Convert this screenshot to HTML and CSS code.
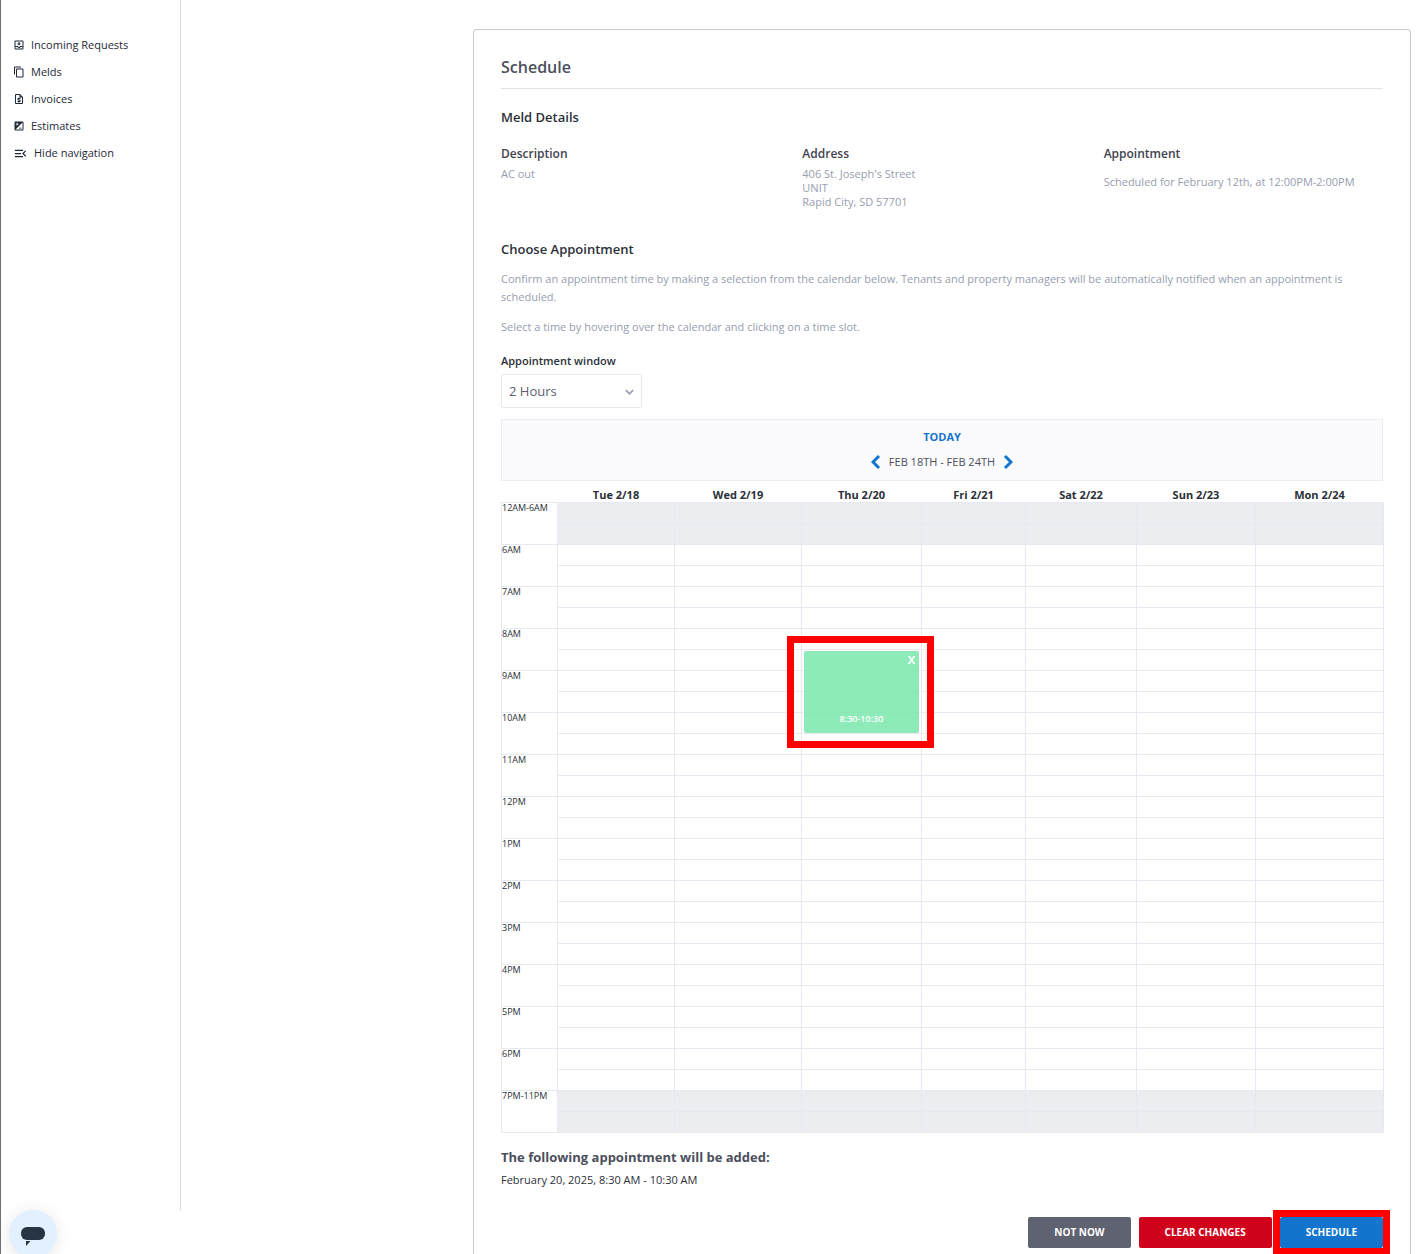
FILE: index.html
```html
<!DOCTYPE html>
<html lang="en">
<head>
<meta charset="utf-8">
<meta name="viewport" content="width=device-width, initial-scale=1">
<title>Schedule</title>
<link rel="stylesheet" href="styles.css">
</head>
<body>
<div class="layout">
  <nav class="sidebar" aria-label="Main">
    <a class="nav-link" href="#requests"><svg class="icon" viewBox="0 0 24 24"><path d="M19 3H5a2 2 0 0 0-2 2v14a2 2 0 0 0 2 2h14a2 2 0 0 0 2-2V5a2 2 0 0 0-2-2zM5 19v-3h3.600c.7 1.200 2 2 3.400 2s2.800-.8 3.400-2H19v3H5zm14-5h-5a2 2 0 0 1-4 0H5V5h14v9zm-3-5h-3V6h-2v3H8l4 4 4-4z"/></svg>Incoming Requests</a>
    <a class="nav-link" href="#melds"><svg class="icon" viewBox="0 0 24 24"><path d="M16 1H4a2 2 0 0 0-2 2v14h2V3h12V1zm3 4H8a2 2 0 0 0-2 2v14a2 2 0 0 0 2 2h11a2 2 0 0 0 2-2V7a2 2 0 0 0-2-2zm0 16H8V7h11v14z"/></svg>Melds</a>
    <a class="nav-link" href="#invoices"><svg class="icon" viewBox="0 0 24 24"><path d="M14 2H6a2 2 0 0 0-2 2v16a2 2 0 0 0 2 2h12a2 2 0 0 0 2-2V8l-6-6zM6 20V4h7v5h5v11H6zm5-1h2v-1h1a1 1 0 0 0 1-1v-3a1 1 0 0 0-1-1h-3v-1h4v-2h-2V9h-2v1h-1a1 1 0 0 0-1 1v3a1 1 0 0 0 1 1h3v1H9v2h2v1z"/></svg>Invoices</a>
    <a class="nav-link" href="#estimates"><svg class="icon" viewBox="0 0 24 24"><path d="M19 3H5a2 2 0 0 0-2 2v14a2 2 0 0 0 2 2h14a2 2 0 0 0 2-2V5a2 2 0 0 0-2-2zM5.500 7.500h2v-2H9v2h2V9H9v2H7.500V9h-2V7.500zM19 19H5L19 5v14zm-2-2v-1.500h-5V17h5z"/></svg>Estimates</a>
    <a class="nav-link" href="#hide"><svg class="icon icon-wide" viewBox="0 0 24 24"><path d="M3 18h13v-2H3v2zm0-5h10v-2H3v2zm0-7v2h13V6H3zm18 9.590L17.420 12 21 8.410 19.590 7l-5 5 5 5L21 15.590z"/></svg>Hide navigation</a>
  </nav>

  <main class="content">
    <section class="card">
      <h1 class="card-title">Schedule</h1>

      <h2 class="section-title">Meld Details</h2>
      <div class="details">
        <div>
          <h3 class="detail-label">Description</h3>
          <p class="detail-text">AC out</p>
        </div>
        <div>
          <h3 class="detail-label">Address</h3>
          <address class="detail-text">406 St. Joseph's Street<br>UNIT<br>Rapid City, SD 57701</address>
        </div>
        <div>
          <h3 class="detail-label">Appointment</h3>
          <p class="detail-text detail-text-spaced">Scheduled for February 12th, at 12:00PM-2:00PM</p>
        </div>
      </div>

      <h2 class="section-title choose-title">Choose Appointment</h2>
      <div class="hints">
        <p>Confirm an appointment time by making a selection from the calendar below. Tenants and property managers will be automatically notified when an appointment is scheduled.</p>
        <p>Select a time by hovering over the calendar and clicking on a time slot.</p>
      </div>

      <label class="field-label" for="window">Appointment window</label>
      <div class="select-wrap">
        <select class="select" id="window">
          <option>1 Hour</option>
          <option selected>2 Hours</option>
          <option>4 Hours</option>
        </select>
        <svg class="select-arrow" viewBox="0 0 10 6"><path d="M1 1l4 4 4-4"/></svg>
      </div>

      <div class="calendar-bar">
        <button class="today" type="button">TODAY</button>
        <div class="week">
          <button class="week-step" type="button" aria-label="Previous week"><svg viewBox="0 0 10 16"><path d="M8 2L2 8l6 6"/></svg></button>
          <span>FEB 18TH - FEB 24TH</span>
          <button class="week-step" type="button" aria-label="Next week"><svg viewBox="0 0 10 16"><path d="M2 2l6 6-6 6"/></svg></button>
        </div>
      </div>

      <table class="calendar">
        <colgroup><col class="c-time"><col class="c-tue"><col class="c-wed"><col class="c-thu"><col class="c-fri"><col class="c-sat"><col class="c-sun"><col class="c-mon"></colgroup>
        <thead>
          <tr><td></td><th scope="col">Tue 2/18</th><th scope="col">Wed 2/19</th><th scope="col">Thu 2/20</th><th scope="col">Fri 2/21</th><th scope="col">Sat 2/22</th><th scope="col">Sun 2/23</th><th scope="col">Mon 2/24</th></tr>
        </thead>
        <tbody>
          <tr class="off"><th scope="rowgroup" rowspan="2">12AM-6AM</th><td><td><td><td><td><td><td></tr>
          <tr class="off"><td><td><td><td><td><td><td></tr>
          <tr><th scope="rowgroup" rowspan="2">6AM</th><td><td><td><td><td><td><td></tr>
          <tr><td><td><td><td><td><td><td></tr>
          <tr><th scope="rowgroup" rowspan="2">7AM</th><td><td><td><td><td><td><td></tr>
          <tr><td><td><td><td><td><td><td></tr>
          <tr><th scope="rowgroup" rowspan="2">8AM</th><td><td><td><td><td><td><td></tr>
          <tr><td><td><td><div class="slot"><div class="highlight"><div class="event"><button class="event-close" type="button" aria-label="Remove 8:30-10:30">X</button><span class="event-time">8:30-10:30</span></div></div></div><td><td><td><td></tr>
          <tr><th scope="rowgroup" rowspan="2">9AM</th><td><td><td><td><td><td><td></tr>
          <tr><td><td><td><td><td><td><td></tr>
          <tr><th scope="rowgroup" rowspan="2">10AM</th><td><td><td><td><td><td><td></tr>
          <tr><td><td><td><td><td><td><td></tr>
          <tr><th scope="rowgroup" rowspan="2">11AM</th><td><td><td><td><td><td><td></tr>
          <tr><td><td><td><td><td><td><td></tr>
          <tr><th scope="rowgroup" rowspan="2">12PM</th><td><td><td><td><td><td><td></tr>
          <tr><td><td><td><td><td><td><td></tr>
          <tr><th scope="rowgroup" rowspan="2">1PM</th><td><td><td><td><td><td><td></tr>
          <tr><td><td><td><td><td><td><td></tr>
          <tr><th scope="rowgroup" rowspan="2">2PM</th><td><td><td><td><td><td><td></tr>
          <tr><td><td><td><td><td><td><td></tr>
          <tr><th scope="rowgroup" rowspan="2">3PM</th><td><td><td><td><td><td><td></tr>
          <tr><td><td><td><td><td><td><td></tr>
          <tr><th scope="rowgroup" rowspan="2">4PM</th><td><td><td><td><td><td><td></tr>
          <tr><td><td><td><td><td><td><td></tr>
          <tr><th scope="rowgroup" rowspan="2">5PM</th><td><td><td><td><td><td><td></tr>
          <tr><td><td><td><td><td><td><td></tr>
          <tr><th scope="rowgroup" rowspan="2">6PM</th><td><td><td><td><td><td><td></tr>
          <tr><td><td><td><td><td><td><td></tr>
          <tr class="off"><th scope="rowgroup" rowspan="2">7PM-11PM</th><td><td><td><td><td><td><td></tr>
          <tr class="off"><td><td><td><td><td><td><td></tr>
        </tbody>
      </table>

      <h3 class="summary-title">The following appointment will be added:</h3>
      <p class="summary-text">February 20, 2025, 8:30 AM - 10:30 AM</p>

      <div class="actions">
        <button class="btn btn-grey" type="button">NOT NOW</button>
        <button class="btn btn-red" type="button">CLEAR CHANGES</button>
        <div class="btn-frame"><button class="btn btn-blue" type="button">SCHEDULE</button></div>
      </div>
    </section>
  </main>
</div>
<button class="chat" type="button" aria-label="Open chat"><svg viewBox="0 0 26 20"><rect x="1" y="0" width="24" height="13" rx="6"/><path d="M6 14h4.500L6 19z"/></svg></button>
</body>
</html>
```
FILE: styles.css
```css
* {
  box-sizing: border-box;
}

body {
  margin: 0;
  background: #fff;
  color: #2b2f38;
  font-family: "Open Sans", "Noto Sans", sans-serif;
  font-size: 11px;
  line-height: 16px;
}

h1, h2, h3, p, address {
  margin: 0;
  font-style: normal;
}

button {
  border: 0;
  padding: 0;
  background: none;
  font-family: inherit;
  cursor: pointer;
}

.layout {
  display: flex;
  min-height: 100vh;
  border-left: 1px solid #6e6e6e;
}

.sidebar {
  display: flex;
  flex-direction: column;
  flex: none;
  gap: 11px;
  width: 180px;
  margin-bottom: 44px;
  padding: 37px 12px;
  border-right: 1px solid #d3d9e0;
}

.nav-link {
  display: flex;
  align-items: center;
  gap: 6px;
  color: #1f2937;
  font-weight: 500;
  text-decoration: none;
}

.icon {
  width: 12px;
  height: 12px;
  fill: currentColor;
}

.icon-wide {
  width: 15px;
  height: 15px;
}

.content {
  display: flex;
  flex: 1;
  min-width: 0;
  padding: 29px 11px 0 292px;
}

.card {
  flex: 1;
  min-width: 0;
  padding: 25px 27px 6px;
  border: 1px solid #c9c9c9;
  border-bottom: 0;
  border-radius: 4px 4px 0 0;
}

.card-title {
  padding-bottom: 9px;
  border-bottom: 1px solid #e3e3e3;
  color: #4b4f5c;
  font-size: 16px;
  font-weight: 600;
  line-height: 24px;
}

.section-title {
  margin-top: 18px;
  font-size: 13px;
  font-weight: 600;
  line-height: 20px;
}

.details {
  display: grid;
  grid-template-columns: repeat(3, 1fr);
  gap: 22px;
  margin-top: 19px;
}

.detail-label {
  color: #3f4350;
  font-size: 12px;
  font-weight: 600;
}

.detail-text {
  margin-top: 5px;
  color: #979db0;
  line-height: 14px;
}

.detail-text-spaced {
  margin-top: 13px;
}

.choose-title {
  margin-top: 30px;
}

.hints {
  display: grid;
  gap: 12px;
  margin-top: 11px;
  color: #979db0;
  line-height: 18px;
}

.field-label {
  display: block;
  margin: 17px 0 5px;
  font-weight: 600;
}

.select-wrap {
  position: relative;
  width: 141px;
}

.select {
  display: block;
  width: 100%;
  height: 34px;
  padding: 0 7px;
  border: 1px solid #e8e9ee;
  border-radius: 2px;
  background: #fff;
  color: #5a5e6d;
  font-family: inherit;
  font-size: 13px;
  appearance: none;
}

.select-arrow {
  position: absolute;
  top: 15px;
  right: 8px;
  width: 9px;
  height: 6px;
  fill: none;
  stroke: #9aa0b3;
  stroke-width: 2;
  pointer-events: none;
}

.calendar-bar {
  display: flex;
  flex-direction: column;
  align-items: center;
  gap: 9px;
  margin-top: 11px;
  padding: 9px 0 10px;
  border: 1px solid #ebecf0;
  background: #fbfbfd;
}

.today {
  color: #1274cc;
  font-size: 11px;
  font-weight: 700;
  line-height: 16px;
}

.week {
  display: flex;
  align-items: center;
  gap: 8px;
  color: #4b4f5c;
}

.week-step svg {
  display: block;
  width: 10px;
  height: 16px;
  fill: none;
  stroke: #1274cc;
  stroke-width: 3;
}

.calendar {
  width: 100%;
  border-collapse: collapse;
  table-layout: fixed;
}

.c-time { width: 56px; }
.c-tue { width: 117px; }
.c-wed { width: 127px; }
.c-thu { width: 120px; }
.c-fri { width: 104px; }
.c-sat { width: 111px; }
.c-sun { width: 119px; }
.c-mon { width: 128px; }

.calendar th,
.calendar td {
  height: 21px;
  padding: 0;
}

.calendar thead th {
  font-weight: 700;
  line-height: 14px;
  vertical-align: bottom;
}

.calendar tbody th,
.calendar tbody td {
  border: 1px solid #e8e8f2;
}

.calendar tbody th {
  font-size: 9px;
  font-weight: 400;
  line-height: 10px;
  text-align: left;
  vertical-align: top;
}

.off td {
  background: #ecedf1;
}

.slot {
  position: relative;
  height: 20px;
}

.highlight {
  position: absolute;
  top: -14px;
  right: -13px;
  left: -15px;
  height: 112px;
  padding: 8px 8px 8px 10px;
  border: 7px solid #f00;
}

.event {
  display: flex;
  flex-direction: column;
  justify-content: space-between;
  height: 100%;
  padding: 2px 3px 8px;
  border-radius: 2px;
  background: rgba(122, 232, 171, 0.85);
  color: #fff;
}

.event-close {
  align-self: flex-end;
  padding: 0 1px;
  color: #fff;
  font-size: 11px;
  font-weight: 700;
  line-height: 14px;
}

.event-time {
  font-size: 9px;
  font-weight: 600;
  line-height: 12px;
  text-align: center;
}

.summary-title {
  margin-top: 15px;
  color: #4b4f5c;
  font-size: 13px;
  font-weight: 700;
  line-height: 18px;
}

.summary-text {
  margin-top: 6px;
}

.actions {
  display: flex;
  justify-content: flex-end;
  gap: 8px;
  margin-top: 29px;
}

.btn {
  display: block;
  height: 31px;
  padding: 0 26px;
  border-radius: 2px;
  color: #fff;
  font-size: 10px;
  font-weight: 700;
}

.btn-grey { background: #5f6271; }
.btn-red { background: #d0021b; }
.btn-blue { background: #1274cc; }

.btn-frame {
  box-shadow: 0 0 0 7px #f00;
}

.chat {
  position: fixed;
  bottom: -4px;
  left: 9px;
  display: flex;
  align-items: center;
  justify-content: center;
  width: 48px;
  height: 48px;
  padding-top: 6px;
  border-radius: 50%;
  background: #e3f0ff;
  box-shadow: 0 2px 16px rgba(0, 0, 0, 0.1);
}

.chat svg {
  width: 26px;
  height: 20px;
  fill: #273444;
}
```
